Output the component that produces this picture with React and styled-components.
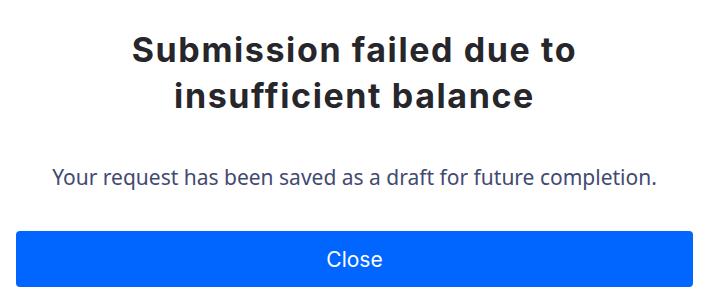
import React from 'react';
import styled, { createGlobalStyle } from 'styled-components';

const GlobalStyle = createGlobalStyle`
	html, body {
		margin: 0;
		padding: 0;
		background: #ffffff;
	}
	* {
		box-sizing: border-box;
	}
`;

function App() {
	return (
		<>
			<GlobalStyle />
			<Wrapper>
				<Title>
					Submission failed due to
					<br />
					insufficient balance
				</Title>
				<Message>Your request has been saved as a draft for future completion.</Message>
				<Button type="button">Close</Button>
			</Wrapper>
		</>
	);
}
export default App;

const Wrapper = styled.div`
	width: 709px;
	height: 305px;
	padding: 27px 16px 0;
	display: flex;
	flex-direction: column;
	align-items: stretch;
`;
const Title = styled.h1`
	margin: 0;
	font-family: 'Inter', 'Liberation Sans', sans-serif;
	font-size: 34px;
	font-weight: 700;
	line-height: 46px;
	color: #26262b;
	text-align: center;
	letter-spacing: 1.6px;
`;
const Message = styled.p`
	margin: 45px 0 0;
	font-family: 'Noto Sans', 'Liberation Sans', sans-serif;
	font-size: 21px;
	line-height: 26px;
	color: #434a72;
	text-align: center;
`;
const Button = styled.button`
	margin-top: 41px;
	height: 56px;
	width: 100%;
	border: none;
	border-radius: 4px;
	background-color: #0066ff;
	color: #ffffff;
	font-family: 'Inter', 'Liberation Sans', sans-serif;
	font-size: 21px;
	font-weight: 400;
	cursor: pointer;
`;
